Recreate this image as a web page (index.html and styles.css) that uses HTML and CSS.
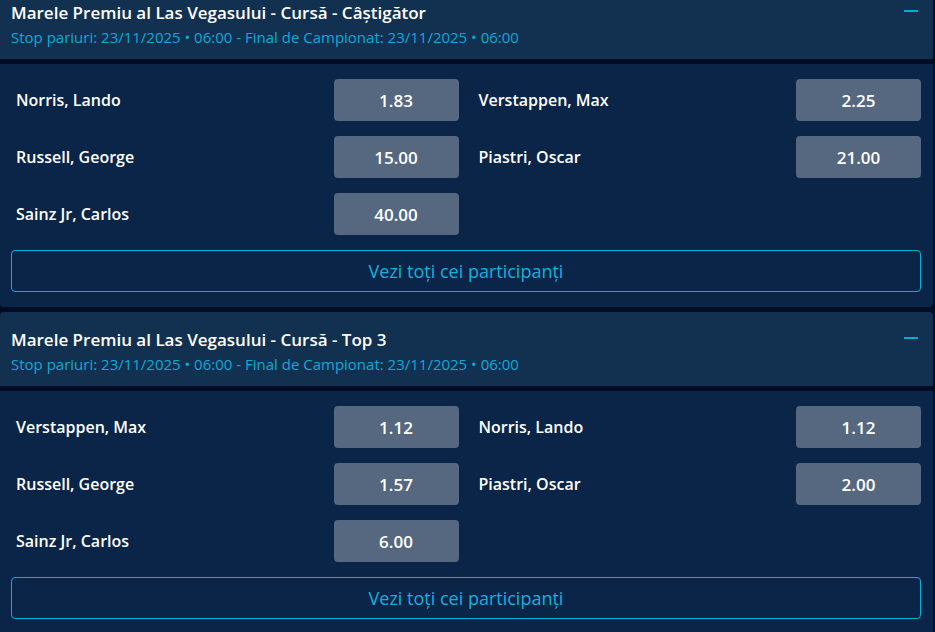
FILE: index.html
```html
<!DOCTYPE html>
<html lang="ro">
<head>
<meta charset="utf-8">
<title>Marele Premiu al Las Vegasului</title>
<link rel="stylesheet" href="styles.css">
</head>
<body>
<div class="page">
  <section class="market">
    <header class="market-head">
      <div class="head-text">
        <h2 class="title">Marele Premiu al Las Vegasului - Cursă - Câștigător</h2>
        <p class="sub">Stop pariuri: 23/11/2025 • 06:00 - Final de Campionat: 23/11/2025 • 06:00</p>
      </div>
      <span class="collapse" aria-label="Restrânge"></span>
    </header>
    <div class="market-body">
      <div class="sel"><span class="name">Norris, Lando</span><button class="odd">1.83</button></div>
      <div class="sel"><span class="name">Verstappen, Max</span><button class="odd">2.25</button></div>
      <div class="sel"><span class="name">Russell, George</span><button class="odd">15.00</button></div>
      <div class="sel"><span class="name">Piastri, Oscar</span><button class="odd">21.00</button></div>
      <div class="sel"><span class="name">Sainz Jr, Carlos</span><button class="odd">40.00</button></div>
      <div class="sel empty"></div>
      <button class="all">Vezi toți cei participanți</button>
    </div>
  </section>
  <section class="market">
    <header class="market-head">
      <div class="head-text">
        <h2 class="title">Marele Premiu al Las Vegasului - Cursă - Top 3</h2>
        <p class="sub">Stop pariuri: 23/11/2025 • 06:00 - Final de Campionat: 23/11/2025 • 06:00</p>
      </div>
      <span class="collapse" aria-label="Restrânge"></span>
    </header>
    <div class="market-body">
      <div class="sel"><span class="name">Verstappen, Max</span><button class="odd">1.12</button></div>
      <div class="sel"><span class="name">Norris, Lando</span><button class="odd">1.12</button></div>
      <div class="sel"><span class="name">Russell, George</span><button class="odd">1.57</button></div>
      <div class="sel"><span class="name">Piastri, Oscar</span><button class="odd">2.00</button></div>
      <div class="sel"><span class="name">Sainz Jr, Carlos</span><button class="odd">6.00</button></div>
      <div class="sel empty"></div>
      <button class="all">Vezi toți cei participanți</button>
    </div>
  </section>
</div>
</body>
</html>
```

FILE: styles.css
```css
* { box-sizing: border-box; }
html, body {
  margin: 0;
  padding: 0;
  background: #020d24;
  font-family: "Open Sans", "Noto Sans", sans-serif;
  overflow: hidden;
}
.page {
  width: 933px;
  margin-top: -15px;
}
.market {
  margin-bottom: 5px;
}
.market-head {
  background: #12304f;
  height: 74px;
  padding: 17px 15px 0 11px;
  display: flex;
  justify-content: space-between;
  align-items: flex-start;
  border-radius: 4px 4px 0 0;
}
.title {
  margin: 0;
  font-size: 17px;
  line-height: 22px;
  font-weight: 600;
  color: #ffffff;
}
.sub {
  margin: 3px 0 0;
  font-size: 15px;
  line-height: 20px;
  font-weight: 400;
  color: #0ea9d9;
}
.collapse {
  width: 14px;
  height: 2px;
  margin-top: 8px;
  background: #00abd6;
}
.market-body {
  margin-top: 5px;
  background: #0a2548;
  padding: 15px 12px 15px 11px;
  border-radius: 0 0 4px 4px;
  display: grid;
  grid-template-columns: 1fr 1fr;
  column-gap: 15px;
  row-gap: 15px;
}
.sel {
  display: flex;
  align-items: center;
  justify-content: space-between;
  padding-left: 5px;
  height: 42px;
}
.name {
  font-size: 16px;
  font-weight: 600;
  color: #ffffff;
}
.odd {
  width: 125px;
  height: 42px;
  border: 0;
  border-radius: 4px;
  background: #56687f;
  color: #ffffff;
  font-family: inherit;
  font-size: 17px;
  font-weight: 600;
}
.all {
  grid-column: 1 / -1;
  height: 42px;
  border: 1px solid #00b4d8;
  border-radius: 4px;
  background: transparent;
  color: #14b1de;
  font-family: inherit;
  font-size: 18px;
  font-weight: 400;
}
```
